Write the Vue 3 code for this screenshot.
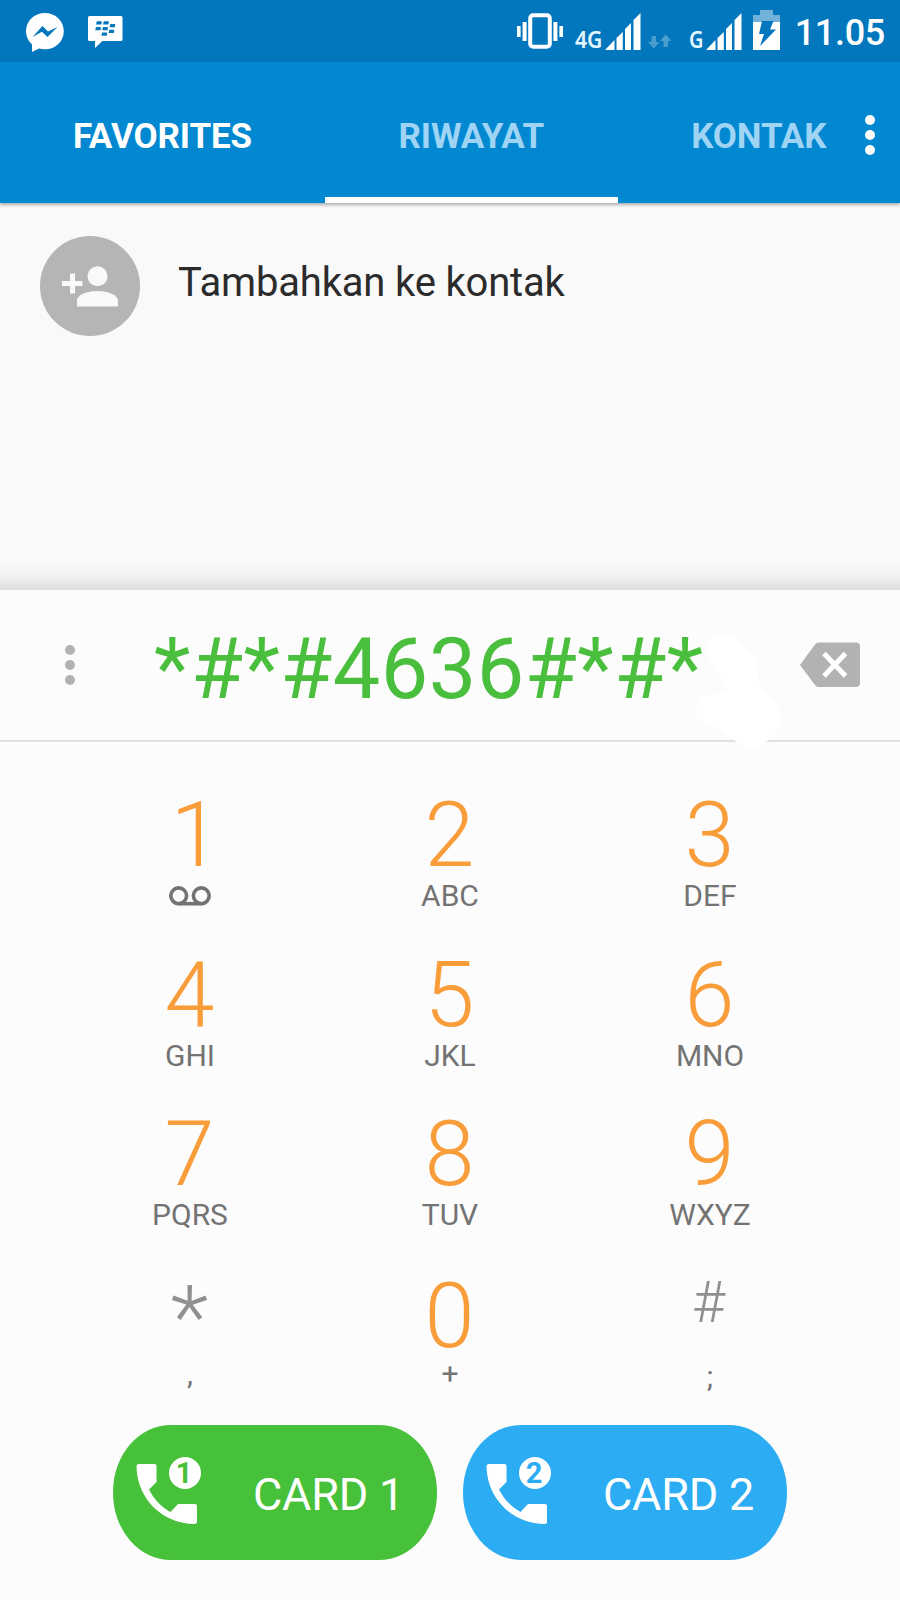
<template>
  <div class="phone">
    <header class="status-bar">
      <svg class="messenger" width="40" height="40" viewBox="0 0 40 40">
        <path d="M20 1C9.200 1 1 9 1 19.200c0 5.200 2.300 9.800 6 13.200V40l7-3.500c1.900.5 3.900.8 6 .8 10.500 0 18.800-8 18.800-18.100S30.500 1 20 1z" fill="#fff" />
        <path d="M7.500 25 17.500 14l5.500 5.500L32.500 15 22.500 25l-5.600-5.300z" fill="#0277bd" />
      </svg>
      <svg class="bbm" width="35" height="32" viewBox="0 0 35 32">
        <path d="M1.500 0h31.500a1.500 1.500 0 0 1 1.500 1.500V23.500a1.500 1.500 0 0 1-1.500 1.500H14.500L7 32V25H1.500A1.500 1.500 0 0 1 0 23.500V1.500A1.500 1.500 0 0 1 1.500 0z" fill="#fff" />
        <g fill="#0277bd">
          <path v-for="(m, i) in bbmMarks" :key="i" :d="`M${m[0] + 0.8} ${m[1]}h4.200q1 0 .8 1l-.5 2.300h-5.300z`" />
        </g>
      </svg>

      <div class="status-right">
        <svg class="vibrate" width="46" height="36" viewBox="0 0 46 36" fill="#fff">
          <rect x="13.200" y="2.200" width="19.600" height="31.600" rx="3" fill="none" stroke="#fff" stroke-width="4" />
          <path d="M0 13h3.600v11H0zM5.600 9h4v19h-4zM36.400 9h4v19h-4zM42.400 13H46v11h-3.600z" />
        </svg>
        <svg class="net net-4g" width="28" height="34" viewBox="0 0 28 34">
          <text x="0" y="26" textLength="27.500" lengthAdjust="spacingAndGlyphs" class="net-label">4G</text>
        </svg>
        <svg class="signal" width="36" height="38" viewBox="0 0 36 38" fill="#fff">
          <path :d="signalPath" />
        </svg>
        <svg class="traffic" width="24" height="16" viewBox="0 0 24 16" fill="#4b9ccf">
          <path d="M3.500 2h4.500v6H11.500l-5.700 6.500L0 8h3.500zM15.500 13h4.500V7H23.500l-5.800-6.500L12 7h3.500z" />
        </svg>
        <svg class="net net-g" width="15" height="34" viewBox="0 0 15 34">
          <text x="0" y="26" textLength="14.500" lengthAdjust="spacingAndGlyphs" class="net-label">G</text>
        </svg>
        <svg class="signal" width="36" height="38" viewBox="0 0 36 38" fill="#fff">
          <path :d="signalPath" />
        </svg>
        <svg class="battery" width="27" height="40" viewBox="0 0 27 40">
          <path d="M7 0h13v5h7v7H0V5h7z" fill="#72b1d9" />
          <path d="M0 12h27v28H0z" fill="#fff" />
          <path d="M9 11h11.500l-3.500 8.500H23L7 36l4-12H6z" fill="#0277bd" />
        </svg>
        <span class="clock">11.05</span>
      </div>
    </header>

    <nav class="tabs">
      <button
        v-for="tab in tabs"
        :key="tab"
        class="tab"
        :class="{ bright: tab === 'FAVORITES', current: tab === 'RIWAYAT' }"
      >
        {{ tab }}
      </button>
      <button class="more" aria-label="Menu"><i></i><i></i><i></i></button>
    </nav>

    <section class="results">
      <div class="avatar">
        <svg width="56" height="41" viewBox="0 0 56 41" fill="#f9f9f9">
          <circle cx="35.500" cy="10.200" r="10" />
          <path d="M15 40.500V35c0-7 12-10 20.500-10S56 28 56 35v5.500zM8 7.500h5v7.500h7.500v5H13v7.500H8V20H0v-5h8z" />
        </svg>
      </div>
      <span class="add-contact">Tambahkan ke kontak</span>
    </section>

    <section class="display">
      <button class="options" aria-label="Opsi"><i></i><i></i><i></i></button>
      <span class="number">{{ number }}</span>
      <svg class="backspace" width="60" height="46" viewBox="0 0 60 46">
        <path d="M18.500.5H56a4 4 0 0 1 4 4V41a4 4 0 0 1-4 4H18.500q-2 0-3.300-1.700L0 23 15.200 2.200Q16.500.5 18.500.5z" fill="#b2b2b2" />
        <path d="M24 11.500 45.500 34M45.500 11.500 24 34" stroke="#fff" stroke-width="5" />
      </svg>
      <svg class="smudge" width="90" height="118" viewBox="0 0 90 118">
        <path d="M14 6Q25-2 38 4Q48 12 61 25Q62 45 66 57Q85 70 86 84Q84 100 72 108Q64 118 50 114Q38 108 26 96Q8 93 2 84Q-2 70 11 62Q24 62 32 59Q26 44 20 36Q10 24 14 6z" fill="#fff" />
      </svg>
    </section>

    <main class="keypad">
      <button v-for="key in keys" :key="key.main" class="key" :class="key.type">
        <span class="main">{{ key.main }}</span>
        <span class="sub">
          <svg v-if="key.main === '1'" class="voicemail" width="42" height="20" viewBox="0 0 42 20" fill="none" stroke="#737373" stroke-width="3.600">
            <circle cx="9.700" cy="9.800" r="7.900" />
            <circle cx="32.300" cy="9.800" r="7.900" />
            <path d="M9.700 17.700h22.600" />
          </svg>
          <template v-else>{{ key.sub }}</template>
        </span>
      </button>
    </main>

    <footer class="cards">
      <button v-for="n in 2" :key="n" class="card" :class="`sim-${n}`">
        <svg width="66" height="68" viewBox="0 0 66 68">
          <path d="M3 7h15.500q2 0 2 2V25L13 32.500C18.500 43 25 49.500 34.500 55L42 47h17q2 0 2 2V65q0 2-2.500 2C27 67 1 42 .5 9.500Q.5 7 3 7z" fill="#fff" />
          <circle cx="49" cy="16" r="16" fill="#fff" />
          <text x="48" y="26" class="sim-number">{{ n }}</text>
        </svg>
        <span>CARD {{ n }}</span>
      </button>
    </footer>
  </div>
</template>

<script setup>
import { ref } from 'vue'

const tabs = ['FAVORITES', 'RIWAYAT', 'KONTAK']
const number = ref('*#*#4636#*#*')

const keys = [
  { main: '1', sub: '', type: 'one' },
  { main: '2', sub: 'ABC' },
  { main: '3', sub: 'DEF' },
  { main: '4', sub: 'GHI' },
  { main: '5', sub: 'JKL' },
  { main: '6', sub: 'MNO' },
  { main: '7', sub: 'PQRS' },
  { main: '8', sub: 'TUV' },
  { main: '9', sub: 'WXYZ' },
  { main: '*', sub: ',', type: 'star' },
  { main: '0', sub: '+', type: 'zero' },
  { main: '#', sub: ';', type: 'hash' }
]

// four bars cut by one diagonal
const signalPath = 'M0 37 9.500 27V37zM11.500 25 17.800 19V37H11.500zM20 16 26 10V37H20zM28.500 7 35.500 0V37H28.500z'

const bbmMarks = [[8, 5.2], [15, 5.2], [7.2, 11], [14.2, 11], [21.5, 8], [20.5, 13.8], [13.4, 16.5]]
</script>

<style>
body {
  background: #fcfcfc;
}
</style>

<style scoped>
.phone {
  width: 900px;
  height: 1600px;
  overflow: hidden;
  background: #fcfcfc;
  font-family: Roboto, sans-serif;
}

button {
  padding: 0;
  border: none;
  background: none;
  font-family: inherit;
}

svg {
  display: block;
  flex-shrink: 0;
}

.status-bar {
  position: relative;
  z-index: 1;
  display: flex;
  align-items: flex-start;
  height: 62px;
  box-sizing: border-box;
  padding: 12px 15px 0 25px;
  background: #0277bd;
}

.bbm {
  margin: 4px 0 0 23px;
}

.status-right {
  display: flex;
  height: 38px;
  margin-left: auto;
  align-items: flex-end;
}

.vibrate {
  margin-bottom: 1px;
}

.net {
  margin-bottom: -6px;
  overflow: visible;
}

.net-4g {
  margin-left: 12px;
}

.net-label {
  font-family: "Noto Sans", sans-serif;
  font-size: 24px;
  font-weight: 600;
  fill: #e6f6ff;
}

.signal {
  margin: 0 0 -1px 2px;
}

.traffic {
  margin-left: 7px;
}

.net-g {
  margin-left: 17px;
}

.battery {
  margin: 0 1px 0 11px;
}

.clock {
  margin: 0 0 -6px 14px;
  color: #fff;
  font-size: 36px;
  font-weight: 500;
  line-height: 46px;
  letter-spacing: -0.3px;
}

.tabs {
  position: relative;
  display: grid;
  grid-template-columns: 325px 292.5px 282.5px;
  height: 141px;
  background: #0288d1;
  box-shadow: 0 2px 3px rgba(0, 0, 0, 0.3);
}

.tab {
  padding-top: 8px;
  box-sizing: border-box;
  border-bottom: 6px solid transparent;
  border-top: 6px solid transparent;
  color: #9fd4f5;
  font-size: 35px;
  font-weight: 700;
  letter-spacing: -0.1px;
}

.tab.bright {
  color: #fff;
}

.tab.current {
  border-bottom-color: #fff;
}

.more,
.options {
  display: flex;
  flex-direction: column;
  gap: 5px;
}

.more {
  position: absolute;
  top: 53px;
  right: 25px;
}

.more i,
.options i {
  width: 10px;
  height: 10px;
  border-radius: 50%;
  background: #fff;
}

.options i {
  background: #b2b2b2;
}

.results {
  display: flex;
  align-items: flex-start;
  height: 387px;
  box-sizing: border-box;
  padding: 33px 40px 0;
  background: linear-gradient(#f9f9f9 360px, #f2f2f2 373px, #dedede 387px);
}

.avatar {
  display: flex;
  width: 100px;
  height: 100px;
  box-sizing: border-box;
  padding: 30px 0 0 22px;
  border-radius: 50%;
  background: #b5b5b5;
}

.add-contact {
  margin-left: 38px;
  color: #2b2b2b;
  font-size: 40px;
  line-height: 94px;
  letter-spacing: -0.18px;
}

.display {
  position: relative;
  display: flex;
  align-items: center;
  height: 152px;
  box-sizing: border-box;
  padding: 0 40px 0 65px;
  border-bottom: 2px solid #e0e0e0;
}

.number {
  flex: 1;
  padding: 10px 0 0 79px;
  color: #4abf3e;
  font-size: 84.5px;
  line-height: 100px;
  letter-spacing: 0.5px;
}

.smudge {
  position: absolute;
  left: 695px;
  top: 43px;
}

.keypad {
  display: grid;
  grid-template-columns: repeat(3, 260px);
  grid-auto-rows: 159.5px;
  justify-content: center;
  height: 639px;
  padding-top: 44px;
}

.key {
  display: flex;
  flex-direction: column;
  align-items: center;
}

.main {
  margin-right: 1px;
  color: #f99d3b;
  font-size: 90px;
  font-weight: 300;
  line-height: 100px;
}

.sub {
  margin-top: -2px;
  color: #737373;
  font-size: 30px;
  line-height: 24px;
}

.voicemail {
  margin-top: 2px;
}

.one .main {
  padding-left: 12px;
}

.zero {
  padding-top: 2px;
}

.zero .sub {
  margin-top: -5px;
}

.star .main,
.hash .main {
  color: #909090;
}

.star .main {
  font-size: 88px;
  line-height: 103px;
}

.star .sub {
  margin-top: -6px;
}

.hash .main {
  font-size: 57px;
  line-height: 74px;
  padding: 1px 2px 27px 0;
}

.cards {
  display: flex;
  justify-content: center;
  gap: 26px;
}

.card {
  display: flex;
  align-items: flex-start;
  width: 324px;
  height: 135px;
  box-sizing: border-box;
  padding: 32px 0 0 23px;
  border-radius: 58px / 67px;
  color: #fff;
  font-size: 45px;
  line-height: 75px;
}

.card span {
  margin-left: 51px;
  letter-spacing: -0.2px;
}

.sim-1 {
  background: #47c03a;
}

.sim-2 {
  background: #2cacf2;
}

.sim-number {
  font-size: 29px;
  font-weight: 700;
  text-anchor: middle;
}

.sim-1 .sim-number {
  fill: #47c03a;
}

.sim-2 .sim-number {
  fill: #2cacf2;
}
</style>
